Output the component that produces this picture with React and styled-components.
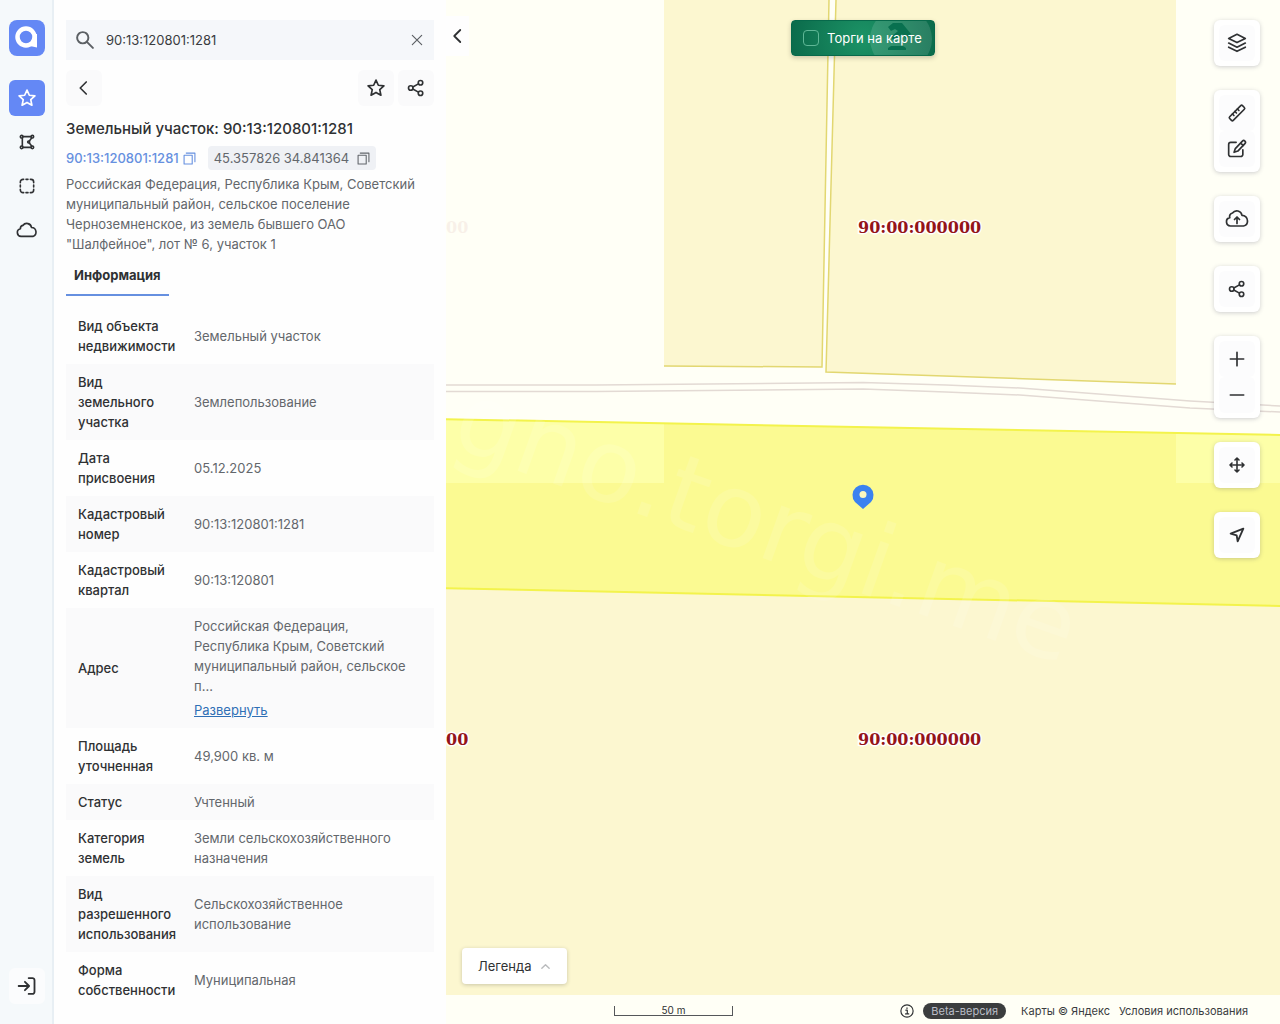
import React, { useState } from 'react'
import { styled, createGlobalStyle, css } from 'styled-components'

const rows = [
  ['Вид объекта недвижимости', 'Земельный участок'],
  ['Вид земельного участка', 'Землепользование'],
  ['Дата присвоения', '05.12.2025'],
  ['Кадастровый номер', '90:13:120801:1281'],
  ['Кадастровый квартал', '90:13:120801'],
  ['Адрес', 'Российская Федерация, Республика Крым, Советский муниципальный район, сельское п...', true],
  ['Площадь уточненная', '49,900 кв. м'],
  ['Статус', 'Учтенный'],
  ['Категория земель', 'Земли сельскохозяйственного назначения'],
  ['Вид разрешенного использования', 'Сельскохозяйственное использование'],
  ['Форма собственности', 'Муниципальная'],
]

const icons = {
  star: <path d="M12 2.500l2.800 6.200 6.700.7-5 4.600 1.400 6.700-5.900-3.400-5.900 3.400 1.400-6.700-5-4.600 6.700-.7z" />,
  left: <path d="M15 4l-8 8 8 8" />,
  close: <path d="M4 4l16 16M20 4L4 20" />,
  search: <><circle cx="9" cy="9" r="7.500" /><path d="M14.500 14.500l8 8" /></>,
  share: <><circle cx="5" cy="12" r="3" /><circle cx="18" cy="5" r="3" /><circle cx="18" cy="19" r="3" /><path d="M7.700 10.600l7.500-4.100M7.700 13.400l7.500 4.100" /></>,
  polygon: <><circle cx="4" cy="4" r="2" /><circle cx="20" cy="4" r="2" /><circle cx="4" cy="20" r="2" /><circle cx="20" cy="20" r="2" /><circle cx="14.500" cy="12" r="1.500" /><path d="M6 4h12M6 20h12M5 6v12M19 6l-3.500 4.500M19 18l-3.500-4.500" /></>,
  dashed: <path d="M2 7V6a4 4 0 0 1 4-4h1M10.500 2h3M17 2h1a4 4 0 0 1 4 4v1M22 10.500v3M22 17v1a4 4 0 0 1-4 4h-1M13.500 22h-3M7 22H6a4 4 0 0 1-4-4v-1M2 13.500v-3" />,
  cloud: <path d="M5.500 19a4.200 4.200 0 0 1-.7-8.300A3.500 3.500 0 0 1 7.500 7a5.300 5.300 0 0 1 9.500 2.300A5 5 0 0 1 18.500 19z" />,
  upload: <><path d="M5.500 19a4.200 4.200 0 0 1-.7-8.300A3.500 3.500 0 0 1 7.500 6a5.300 5.300 0 0 1 9.500 2.300c3 0 5.500 2.400 5.500 5.700a5 5 0 0 1-4 5z" /><path d="M12 16.500v-6M9.500 12.500l2.500-2.500 2.500 2.500" /></>,
  login: <path d="M2 12h12M9.500 7l5 5-5 5M14 2.500h4.500a2.500 2.500 0 0 1 2.500 2.500v14a2.500 2.500 0 0 1-2.500 2.500H14" />,
  copy: <><path d="M2 6h15v16H2z" /><path d="M6 2h16v16" /></>,
  layers: <><path d="M12 1.500l10 5-10 5-10-5z" /><path d="M2 12l10 5 10-5M2 17l10 5 10-5" /></>,
  ruler: <><path d="M16.500 3.200a1.500 1.500 0 0 1 2.100 0l2.200 2.200a1.500 1.500 0 0 1 0 2.100L7.500 20.800a1.500 1.500 0 0 1-2.100 0l-2.200-2.200a1.500 1.500 0 0 1 0-2.100z" /><path d="M6.500 13.200l1.800 1.800M9.500 10.200l1.800 1.800M12.500 7.200l1.800 1.800" /></>,
  edit: <><path d="M11 4H4.500A2.500 2.500 0 0 0 2 6.500v12A2.500 2.500 0 0 0 4.500 21h12a2.500 2.500 0 0 0 2.500-2.500V13" /><path d="M18.500 2.500a2 2 0 0 1 3 3L13 14.500l-4.500 1.500L10 11.500zM16.500 5l3 3" /></>,
  plus: <path d="M12 4v16M4 12h16" />,
  minus: <path d="M4 12h16" />,
  move: <path d="M12 1.500v21M1.500 12h21M9 4.500l3-3 3 3M9 19.500l3 3 3-3M4.500 9l-3 3 3 3M19.500 9l3 3-3 3" />,
  locate: <path d="M21.500 2.500L2.500 10l9 2.500 1.500 9z" />,
  up: <path d="M4 16l8-8 8 8" />,
  info: <><circle cx="12" cy="12" r="10.500" /><path d="M10 10.500h2.500V17M9.500 17h5.500M12 6.500v1" /></>,
}

const Icon = ({ name, size = 20, stroke = 2 }) => (
  <svg width={size} height={size} viewBox="0 0 24 24" fill="none" stroke="currentColor" strokeWidth={stroke} strokeLinecap="round" strokeLinejoin="round" aria-hidden="true">
    {icons[name]}
  </svg>
)

export default function App() {
  const [query, setQuery] = useState('90:13:120801:1281')
  const [torgi, setTorgi] = useState(false)

  return (
    <Page>
      <GlobalStyle />
      <Sidebar>
        <Logo href="#" aria-label="Главная">
          <svg width="36" height="36" viewBox="0 0 36 36">
            <path d="M22 14h6v13.500l-7-1.500z" fill="#fff" />
            <circle cx="17" cy="17" r="8.500" fill="#6488f5" stroke="#fff" strokeWidth="4.500" />
          </svg>
        </Logo>
        <NavButton $active aria-label="Избранное"><Icon name="star" /></NavButton>
        <NavButton aria-label="Полигон"><Icon name="polygon" size={16} stroke={2.4} /></NavButton>
        <NavButton aria-label="Выделение"><Icon name="dashed" size={16} stroke={2.4} /></NavButton>
        <NavButton aria-label="Облако"><Icon name="cloud" size={22} stroke={1.8} /></NavButton>
        <Login aria-label="Войти"><Icon name="login" stroke={2.2} /></Login>
      </Sidebar>

      <Panel>
        <Search>
          <Icon name="search" size={18} stroke={2.6} />
          <input aria-label="Поиск" value={query} onChange={(event) => setQuery(event.target.value)} />
          <button aria-label="Очистить" onClick={() => setQuery('')}><Icon name="close" size={14} /></button>
        </Search>
        <Actions>
          <IconButton aria-label="Назад"><Icon name="left" size={18} stroke={2.2} /></IconButton>
          <div>
            <IconButton aria-label="В избранное"><Icon name="star" /></IconButton>
            <IconButton aria-label="Поделиться"><Icon name="share" size={18} stroke={2.2} /></IconButton>
          </div>
        </Actions>
        <Title>Земельный участок: 90:13:120801:1281</Title>
        <Codes>
          <Code>90:13:120801:1281 <Icon name="copy" size={13} /></Code>
          <Code $grey>45.357826 34.841364 <Icon name="copy" size={13} /></Code>
        </Codes>
        <Address>
          Российская Федерация, Республика Крым, Советский муниципальный район, сельское поселение Черноземненское, из земель бывшего ОАО "Шалфейное", лот № 6, участок 1
        </Address>
        <Tab>Информация</Tab>
        <Table>
          <tbody>
            {rows.map(([label, value, more]) => (
              <tr key={label}>
                <th scope="row">{label}</th>
                <td>{value}{more && <More href="#">Развернуть</More>}</td>
              </tr>
            ))}
          </tbody>
        </Table>
      </Panel>

      <MapArea>
        <MapDrawing />
        <Collapse aria-label="Свернуть"><Icon name="left" size={18} stroke={2.4} /></Collapse>
        <Torgi>
          <Gavel />
          <input type="checkbox" checked={torgi} onChange={() => setTorgi(!torgi)} />
          <span>Торги на карте</span>
        </Torgi>
        <Tools>
          <Tool><button aria-label="Слои"><Icon name="layers" /></button></Tool>
          <Tool>
            <button aria-label="Линейка"><Icon name="ruler" /></button>
            <button aria-label="Рисовать"><Icon name="edit" /></button>
          </Tool>
          <Tool><button aria-label="Загрузить"><Icon name="upload" size={24} stroke={1.7} /></button></Tool>
          <Tool><button aria-label="Поделиться картой"><Icon name="share" size={18} stroke={2.2} /></button></Tool>
          <Tool>
            <button aria-label="Приблизить"><Icon name="plus" /></button>
            <button aria-label="Отдалить"><Icon name="minus" /></button>
          </Tool>
          <Tool><button aria-label="Переместить"><Icon name="move" size={16} stroke={2.4} /></button></Tool>
          <Tool><button aria-label="Моё местоположение"><Icon name="locate" size={16} stroke={2.8} /></button></Tool>
        </Tools>
        <Legend>Легенда <Icon name="up" size={11} stroke={3} /></Legend>
        <MapFooter>
          <Scale>50 m</Scale>
          <Credits>
            <Icon name="info" size={14} />
            <Beta>Beta-версия</Beta>
            <a href="#">Карты © Яндекс</a>
            <a href="#">Условия использования</a>
          </Credits>
        </MapFooter>
      </MapArea>
    </Page>
  )
}

const Gavel = () => (
  <svg width="64" height="36" viewBox="0 0 64 36" aria-hidden="true">
    <circle cx="31" cy="18" r="31" fill="#fff" fillOpacity=".12" />
    <g fill="#08704f">
      <path d="M18 6l5-4h9l9 11-5 5-4-5-8 7-3-4 7-6-3-2-4 2z" />
      <path d="M18 29v-2l3-2h12l3 2v2z" />
    </g>
  </svg>
)

const MapDrawing = () => (
  <MapSvg aria-label="Карта">
    <g fill="#fcf7d0">
      <path d="M218 0H383L376 367L218 366Z" />
      <path d="M390 0H730V384L380 372Z" />
      <path d="M218 423L730 433V483H3000V995H0V483H218Z" />
    </g>
    <g fill="none" stroke="#e2d771" strokeWidth="1.500">
      <path d="M383 0L376 367L218 366M390 0L380 372L730 384" />
    </g>
    <g fill="none" stroke="#e3dad4" strokeWidth="1.500">
      <path d="M0 385H150L417 382.500L500 385L574 388L744 401L834 406L1400 430" />
      <path d="M0 391.500H150L417 389L500 392L574 395L744 408L834 412L1400 436" />
    </g>
    <path d="M-10 419L834 435L3000 476V652L834 606L-10 588Z" fill="#faff3c" fillOpacity=".42" stroke="#f3f34c" strokeWidth="2" />
    <Watermark transform="translate(2 446) rotate(19.600)">gno.torgi.me</Watermark>
    <Label x="0" y="233" opacity=".06">00</Label>
    <Label x="0" y="745">00</Label>
    <Label x="412" y="233">90:00:000000</Label>
    <Label x="412" y="745">90:00:000000</Label>
    <path d="M417 509l-8-7a10.500 10.500 0 1 1 16 0z" fill="#3b82f0" />
    <circle cx="417" cy="494.500" r="3.500" fill="#fbf7c0" />
  </MapSvg>
)

const GlobalStyle = createGlobalStyle`
 *{
  box-sizing: border-box;
 }
 body{
  margin: 0;
  font-family: Inter, "Noto Sans", sans-serif;
  font-size: 13px;
  line-height: 20px;
  color: #2f3133;
 }
 button{
  font: inherit;
  color: inherit;
  border: none;
  padding: 0;
  background: transparent;
  cursor: pointer;
 }
 svg{
  flex: none;
 }
`
const Page = styled.div`
 display: flex;
 height: 100vh;
 overflow: hidden;
`
const center = css`
 display: flex;
 align-items: center;
 justify-content: center;
`
const Sidebar = styled.nav`
 display: flex;
 flex-direction: column;
 align-items: center;
 gap: 8px;
 flex: 0 0 54px;
 padding: 20px 0;
 background: #f5f9fb;
 box-shadow: inset -2px 0 #e8eff4;
`
const Logo = styled.a`
 width: 36px;
 height: 36px;
 margin-bottom: 16px;
 border-radius: 8px;
 background: #6488f5;
`
const NavButton = styled.button`
 ${center}
 width: 36px;
 height: 36px;
 border-radius: 6px;
 ${(props) => props.$active && 'background: #6488f5; color: white;'}
`
const Login = styled(NavButton)`
 margin-top: auto;
 background: #fbfcfd;
`
const Panel = styled.section`
 flex: 0 0 392px;
 padding: 20px 12px 0;
 background: #fefefe;
 overflow: hidden;
`
const Search = styled.div`
 display: flex;
 align-items: center;
 gap: 12px;
 height: 40px;
 padding: 0 10px;
 background: #f5f7fa;
 color: #5c6064;
 input{
  flex: 1;
  min-width: 0;
  border: none;
  outline: none;
  padding: 0;
  background: transparent;
  font: inherit;
  color: #3a3c3f;
 }
 button{
  ${center}
 }
`
const Actions = styled.div`
 display: flex;
 justify-content: space-between;
 margin-top: 10px;
 div{
  display: flex;
  gap: 4px;
 }
`
const IconButton = styled.button`
 ${center}
 width: 36px;
 height: 36px;
 border-radius: 6px;
 background: #fafafb;
`
const Title = styled.h1`
 margin: 12px 0 6px;
 font-size: 15px;
 font-weight: 500;
 line-height: 22px;
`
const Codes = styled.div`
 display: flex;
 align-items: center;
 gap: 12px;
`
const Code = styled.button`
 ${center}
 gap: 4px;
 height: 24px;
 color: #6690e0;
 font-weight: 500;
 ${(props) => props.$grey && css`
  gap: 8px;
  padding: 0 6px;
  border-radius: 4px;
  background: #eff1f5;
  color: #63676c;
  font-weight: 400;
 `}
`
const Address = styled.p`
 margin: 4px 0 0;
 color: #63676c;
`
const Tab = styled.button`
 height: 42px;
 margin-bottom: 12px;
 padding: 2px 8px 0;
 border-bottom: 2px solid #6690e0;
 font-weight: 700;
`
const Table = styled.table`
 width: 100%;
 table-layout: fixed;
 border-collapse: collapse;
 tr:nth-child(even){
  background: #fafafb;
 }
 th{
  width: 116px;
  padding: 8px 0 8px 12px;
  text-align: left;
  font-weight: 500;
 }
 td{
  padding: 8px 12px;
  color: #63676c;
 }
`
const More = styled.a`
 display: block;
 margin-top: 4px;
 color: #2f6fb5;
`
const MapArea = styled.main`
 position: relative;
 flex: 1;
 min-width: 0;
 display: flex;
 flex-direction: column;
 justify-content: flex-end;
 align-items: flex-start;
 background: #fffff6;
 overflow: hidden;
`
const MapSvg = styled.svg`
 position: absolute;
 inset: 0;
 width: 100%;
 height: 100%;
`
const Label = styled.text`
 font: bold 16px "DejaVu Serif", serif;
 fill: #941419;
 stroke: white;
 stroke-width: 3px;
 paint-order: stroke;
`
const Watermark = styled.text`
 font: 102px "DejaVu Sans", sans-serif;
 fill: white;
 fill-opacity: 0.12;
`
const Collapse = styled.button`
 ${center}
 position: absolute;
 left: 0;
 top: 16px;
 width: 23px;
 height: 40px;
 background: #fefefe;
`
const Torgi = styled.label`
 position: absolute;
 left: calc(50% - 72px);
 top: 20px;
 display: flex;
 align-items: center;
 gap: 8px;
 height: 36px;
 padding: 0 12px 0 11px;
 border-radius: 4px;
 border: 1px solid #07694b;
 background: radial-gradient(circle, #1c9366, #0b6b4b);
 box-shadow: 0 2px 5px rgba(0,0,0,0.2);
 color: white;
 white-space: nowrap;
 overflow: hidden;
 svg{
  position: absolute;
  right: 0;
  top: 0;
 }
 input{
  appearance: none;
  width: 16px;
  height: 16px;
  margin: 0;
  border: 1px solid #5fb796;
  border-radius: 4px;
 }
 input:checked{
  background: #5fb796;
 }
 span{
  position: relative;
 }
`
const Tools = styled.div`
 position: absolute;
 right: 20px;
 top: 20px;
 display: flex;
 flex-direction: column;
 gap: 24px;
`
const Tool = styled.div`
 padding: 5px;
 border-radius: 6px;
 background: white;
 box-shadow: 0 1px 4px rgba(60,60,90,0.25);
 button{
  ${center}
  width: 36px;
  height: 36px;
  border-radius: 6px;
  background: #fcfcfd;
 }
`
const Legend = styled.button`
 ${center}
 position: relative;
 gap: 8px;
 height: 36px;
 margin: 0 0 10px 16px;
 padding: 0 16px;
 border-radius: 4px;
 background: white;
 box-shadow: 0 1px 4px rgba(0,0,0,0.2);
 svg{
  color: #b9bbbd;
 }
`
const MapFooter = styled.footer`
 position: relative;
 display: flex;
 align-items: center;
 justify-content: space-between;
 align-self: stretch;
 height: 30px;
 padding: 4px 32px 0 168px;
 font-size: 11px;
 line-height: 16px;
`
const Scale = styled.div`
 width: 119px;
 height: 10px;
 border: 1px solid #55575a;
 border-top: none;
 font-size: 10px;
 line-height: 8px;
 text-align: center;
`
const Credits = styled.div`
 display: flex;
 align-items: center;
 gap: 9px;
 a{
  color: #3a3c3f;
  text-decoration: none;
 }
`
const Beta = styled.span`
 margin-right: 6px;
 padding: 0 8px;
 border-radius: 8px;
 background: #3b3d3e;
 color: #b9bcc6;
`
